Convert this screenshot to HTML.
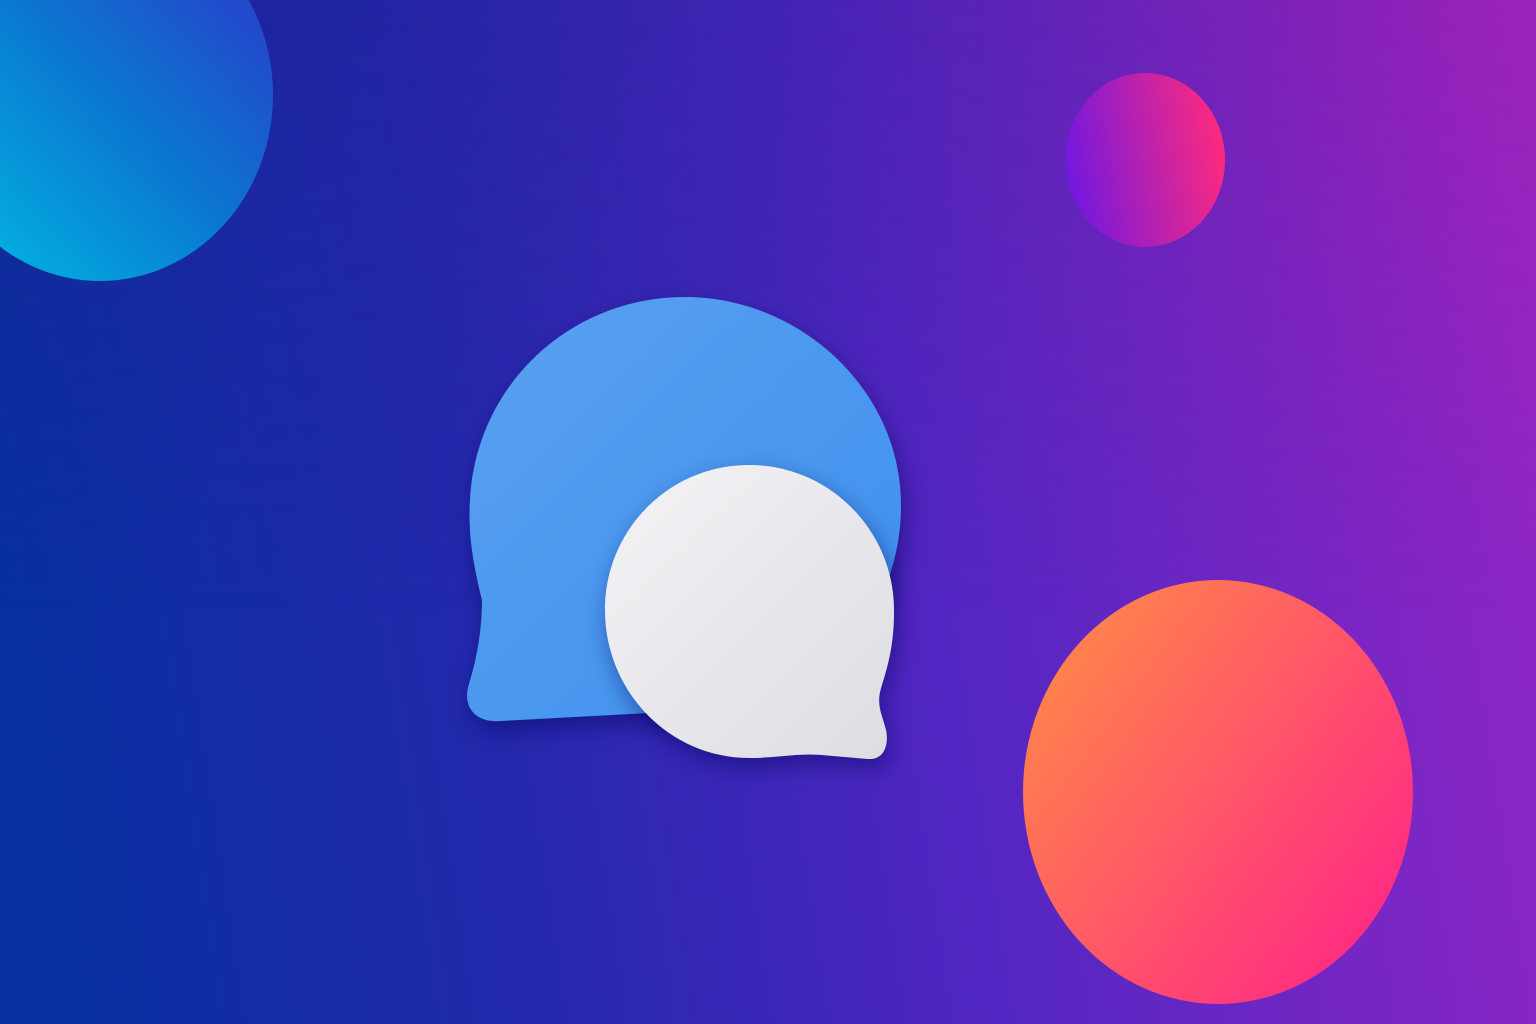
<!DOCTYPE html>
<html><head><meta charset="utf-8"><style>
html,body{margin:0;padding:0;width:1536px;height:1024px;overflow:hidden}
svg{display:block}
</style></head><body>
<svg width="1536" height="1024" viewBox="0 0 1536 1024" xmlns="http://www.w3.org/2000/svg">
<defs>
<linearGradient id="bg" x1="0" y1="0.55" x2="1" y2="0.45">
<stop offset="0" stop-color="#0830a0"/>
<stop offset="0.3" stop-color="#2228ac"/>
<stop offset="0.6" stop-color="#5226c2"/>
<stop offset="1" stop-color="#8e26c4"/>
</linearGradient>
<linearGradient id="tint" x1="0" y1="0" x2="1" y2="0">
<stop offset="0" stop-color="#1a2290" stop-opacity="0.5"/>
<stop offset="0.5" stop-color="#2a1e9a" stop-opacity="0.3"/>
<stop offset="1" stop-color="#a81eb0" stop-opacity="0.5"/>
</linearGradient>
<linearGradient id="fade" x1="0" y1="0" x2="0" y2="1">
<stop offset="0" stop-color="#fff" stop-opacity="1"/>
<stop offset="0.6" stop-color="#fff" stop-opacity="0"/>
</linearGradient>
<mask id="m"><rect width="1536" height="1024" fill="url(#fade)"/></mask>
<linearGradient id="c1" x1="0" y1="1" x2="1" y2="0">
<stop offset="0" stop-color="#00c0e6"/>
<stop offset="0.5" stop-color="#0a78d0"/>
<stop offset="1" stop-color="#3030c8"/>
</linearGradient>
<linearGradient id="c2" x1="0" y1="0.6" x2="1" y2="0.4">
<stop offset="0" stop-color="#7018e0"/>
<stop offset="1" stop-color="#ff2a7e"/>
</linearGradient>
<linearGradient id="c3" x1="0" y1="0.1" x2="1" y2="0.9">
<stop offset="0" stop-color="#ff8c46"/>
<stop offset="1" stop-color="#ff2288"/>
</linearGradient>
<linearGradient id="blue" x1="0" y1="0" x2="1" y2="1">
<stop offset="0" stop-color="#5aa0f0"/>
<stop offset="1" stop-color="#3c90ee"/>
</linearGradient>
<linearGradient id="white" x1="0" y1="0" x2="1" y2="1">
<stop offset="0" stop-color="#f4f4f6"/>
<stop offset="1" stop-color="#dcdce2"/>
</linearGradient>
<filter id="sh" x="-20%" y="-20%" width="140%" height="140%">
<feDropShadow dx="4" dy="10" stdDeviation="12" flood-color="#10105a" flood-opacity="0.45"/>
</filter>
</defs>
<rect width="1536" height="1024" fill="url(#bg)"/>
<rect width="1536" height="1024" fill="url(#tint)" mask="url(#m)"/>
<ellipse cx="100" cy="95" rx="173" ry="186" fill="url(#c1)"/>
<ellipse cx="1145" cy="160" rx="80" ry="87" fill="url(#c2)"/>
<ellipse cx="1218" cy="792" rx="195" ry="212" fill="url(#c3)"/>
<path filter="url(#sh)" fill="url(#blue)" d="M482,600 C472,560 468,530 470,500 C476,385 570,297 685,297 C800,297 901,390 901,505 C901,600 840,690 740,708 L500,721 C474,723 462,705 469,684 C477,658 482,630 482,600 Z"/>
<path filter="url(#sh)" fill="url(#white)" d="M881,688 C890,660 894,640 894,610 C894,530 829,465 749,465 C669,465 605,530 605,610 C605,690 668,758 750,758 C776,758 798,753 822,755 L868,759 C884,760 889,745 886,730 C882,714 876,705 881,688 Z"/>
</svg>
</body></html>
